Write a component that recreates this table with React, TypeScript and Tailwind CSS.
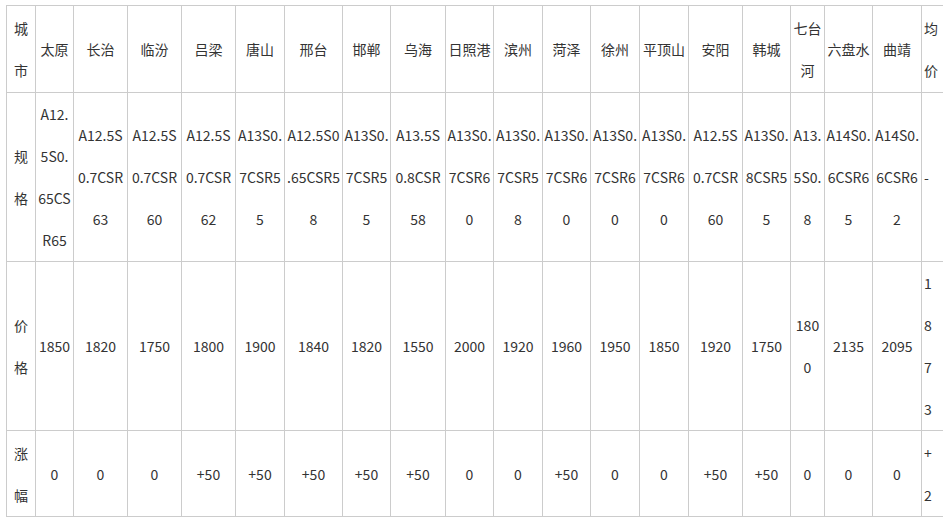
import React from "react";

const widths = [29, 38, 54, 54, 54, 49, 58, 48, 55, 48, 49, 48, 49, 49, 54, 48, 34, 48, 49, 44];

const header: string[][] = [
  ["城", "市"], ["太原"], ["长治"], ["临汾"], ["吕梁"], ["唐山"], ["邢台"], ["邯郸"], ["乌海"], ["日照港"],
  ["滨州"], ["菏泽"], ["徐州"], ["平顶山"], ["安阳"], ["韩城"], ["七台", "河"], ["六盘水"], ["曲靖"], ["均", "价"],
];

const spec: string[][] = [
  ["规", "格"],
  ["A12.", "5S0.", "65CS", "R65"],
  ["A12.5S", "0.7CSR", "63"],
  ["A12.5S", "0.7CSR", "60"],
  ["A12.5S", "0.7CSR", "62"],
  ["A13S0.", "7CSR5", "5"],
  ["A12.5S0", ".65CSR5", "8"],
  ["A13S0.", "7CSR5", "5"],
  ["A13.5S", "0.8CSR", "58"],
  ["A13S0.", "7CSR6", "0"],
  ["A13S0.", "7CSR5", "8"],
  ["A13S0.", "7CSR6", "0"],
  ["A13S0.", "7CSR6", "0"],
  ["A13S0.", "7CSR6", "0"],
  ["A12.5S", "0.7CSR", "60"],
  ["A13S0.", "8CSR5", "5"],
  ["A13.", "5S0.", "8"],
  ["A14S0.", "6CSR6", "5"],
  ["A14S0.", "6CSR6", "2"],
  ["-"],
];

const price: string[][] = [
  ["价", "格"], ["1850"], ["1820"], ["1750"], ["1800"], ["1900"], ["1840"], ["1820"], ["1550"], ["2000"],
  ["1920"], ["1960"], ["1950"], ["1850"], ["1920"], ["1750"], ["180", "0"], ["2135"], ["2095"], ["1", "8", "7", "3"],
];

const change: string[][] = [
  ["涨", "幅"], ["0"], ["0"], ["0"], ["+50"], ["+50"], ["+50"], ["+50"], ["+50"], ["0"],
  ["0"], ["+50"], ["0"], ["0"], ["+50"], ["+50"], ["0"], ["0"], ["0"], ["+", "2"],
];

function Row({ cells, h }: { cells: string[][]; h: string }) {
  return (
    <tr>
      {cells.map((lines, i) => (
        <td
          key={i}
          className={`${h} border border-[#cccccc] p-0 align-middle whitespace-nowrap ${
            i === cells.length - 1 ? "text-left pl-[2px]" : "text-center"
          }`}
        >
          {lines.map((l, j) => (
            <div key={j} className="leading-[42px]">
              {l}
            </div>
          ))}
        </td>
      ))}
    </tr>
  );
}

export default function App() {
  return (
    <div className="w-[943px] h-[523px] overflow-hidden bg-white">
      <div className="pl-[6px] pt-[5px] w-[1000px]">
        <table
          className="table-fixed border-collapse text-[14px] text-[#333333] w-[959px]"
          style={{ fontFamily: '"Noto Sans CJK SC", "Noto Sans", sans-serif' }}
        >
          <colgroup>
            {widths.map((w, i) => (
              <col key={i} style={{ width: w }} />
            ))}
          </colgroup>
          <tbody>
            <Row cells={header} h="h-[87px]" />
            <Row cells={spec} h="h-[169px]" />
            <Row cells={price} h="h-[169px]" />
            <Row cells={change} h="h-[86px]" />
          </tbody>
        </table>
      </div>
    </div>
  );
}
